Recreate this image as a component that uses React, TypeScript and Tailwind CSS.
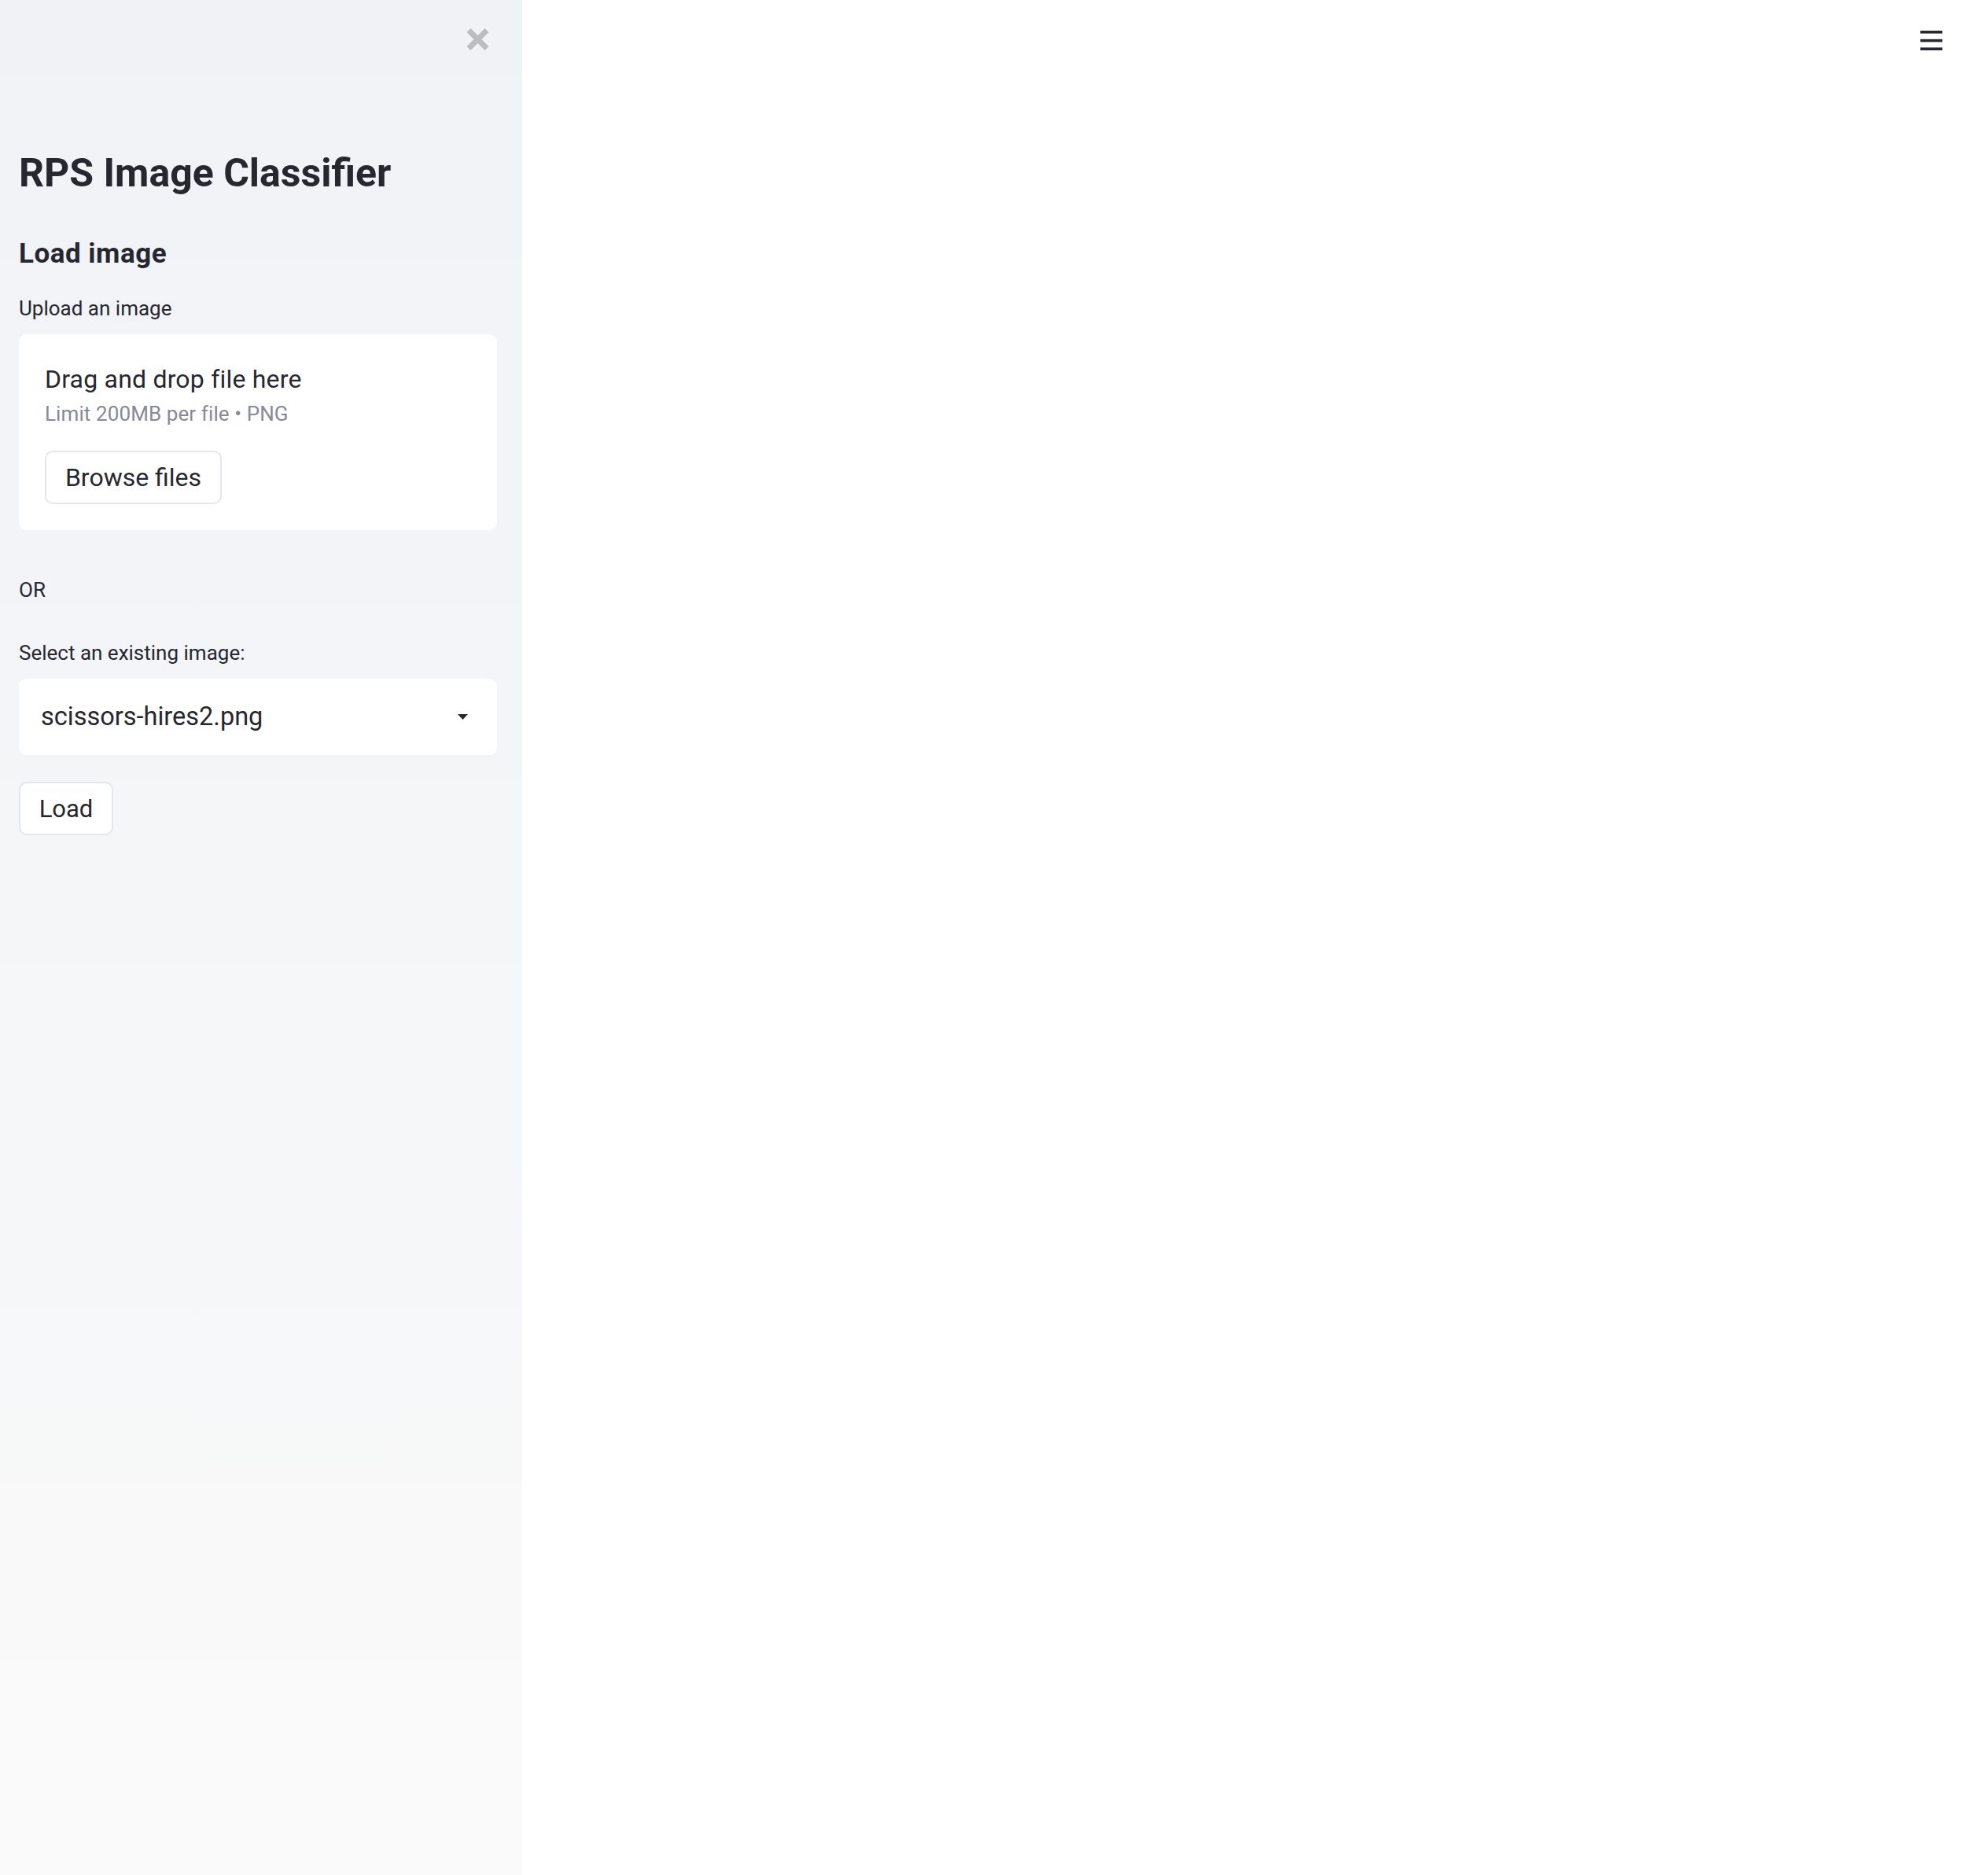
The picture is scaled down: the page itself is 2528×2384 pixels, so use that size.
import React from 'react';

const FONT = "font-['Roboto','Liberation_Sans',sans-serif]";

// Close button in the sidebar corner
const CloseIcon = () => (
  <svg width="29" height="28" viewBox="0 0 29 28" aria-hidden="true">
    <path d="M3 2.5 L26 25.5 M26 2.5 L3 25.5" stroke="#bcbdc1" strokeWidth="7" strokeLinecap="butt" />
  </svg>
);

// Three-bar menu at the top right
const MenuIcon = () => (
  <svg width="28" height="26" viewBox="0 0 28 26" aria-hidden="true">
    <rect x="0" y="0" width="28" height="3.6" fill="#262730" />
    <rect x="0" y="10.8" width="28" height="3.6" fill="#262730" />
    <rect x="0" y="21.4" width="28" height="3.6" fill="#262730" />
  </svg>
);

const Caret = () => (
  <svg width="13" height="7" viewBox="0 0 13 7" aria-hidden="true">
    <path d="M0 0 H13 L6.5 7 Z" fill="#262730" />
  </svg>
);

const Sidebar: React.FC = () => (
  <aside className="w-[664px] shrink-0 min-h-screen bg-linear-to-b from-[#f0f2f6] to-[#fafafa] pl-6 pr-8 relative">
    <div className="flex justify-end pt-9 mr-[10px]">
      <button className="w-[29px] h-[28px] flex items-center justify-center">
        <CloseIcon />
      </button>
    </div>

    <h1 className="mt-[131px] text-[50px] leading-none font-bold text-[#262730]">
      RPS Image Classifier
    </h1>

    <h3 className="mt-[60px] text-[35px] leading-none font-bold text-[#262730] tracking-[0.5px]">Load image</h3>

    <p className="mt-[39px] text-[26px] leading-none text-[#262730]">Upload an image</p>

    {/* Upload drop zone */}
    <div className="mt-[20px] h-[249px] bg-white rounded-[10px] pl-[33px] pt-[41px]">
      <div className="text-[32px] leading-none text-[#262730] tracking-[0.2px]">Drag and drop file here</div>
      <div className="mt-[15px] text-[26px] leading-none text-[#868997] tracking-[0.1px]">Limit 200MB per file • PNG</div>
      <button className="mt-[34px] h-[68px] w-[225px] bg-white border-2 border-[#e4e7ed] rounded-[10px] text-[32px] leading-none text-[#262730] flex items-center justify-center">
        Browse files
      </button>
    </div>

    <p className="mt-[63px] text-[26px] leading-none text-[#262730]">OR</p>

    <p className="mt-[54px] text-[26px] leading-none text-[#262730]">Select an existing image:</p>

    <div className="mt-[20px] h-[97px] bg-white rounded-[10px] pl-7 pr-[37px] flex items-center justify-between">
      <span className="text-[32.5px] leading-none text-[#262730]">scissors-hires2.png</span>
      <Caret />
    </div>

    <button className="mt-[34px] h-[68px] w-[120px] bg-white border-2 border-[#e4e7ed] rounded-[10px] text-[31px] leading-none text-[#262730] flex items-center justify-center">
      Load
    </button>
  </aside>
);

export default function App() {
  return (
    <div className={`flex min-h-screen w-full bg-white ${FONT}`}>
      <Sidebar />
      <main className="flex-1 flex justify-end pt-[39px] pr-[58px]">
        <div className="h-fit">
          <MenuIcon />
        </div>
      </main>
    </div>
  );
}
